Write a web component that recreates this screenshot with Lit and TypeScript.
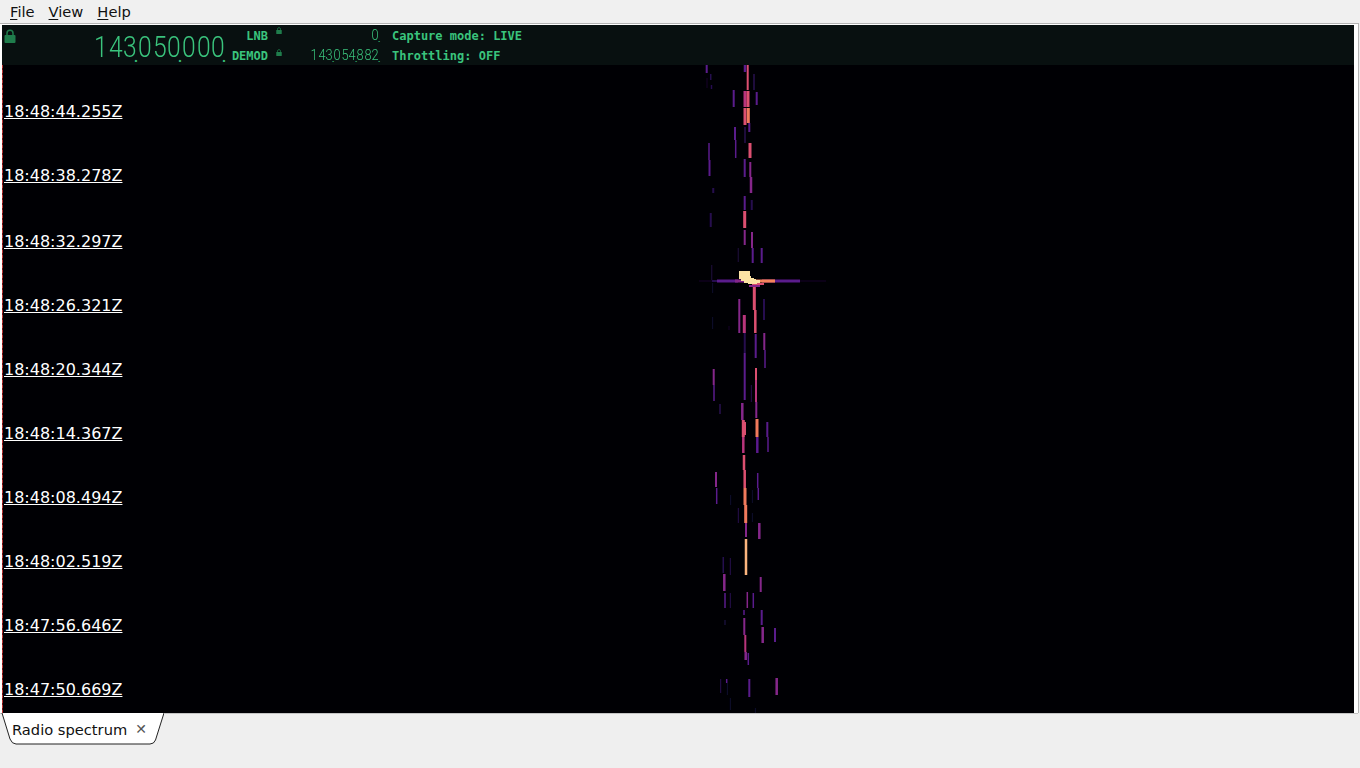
import { LitElement, html, css, svg } from "lit";
import { customElement } from "lit/decorators.js";

const C: Record<string, string> = {
  a: "#150b2e", b: "#27104f", p: "#5a1a8c", m: "#85278a", r: "#b8347c", k: "#dc5070", o: "#f17a5c", y: "#fbb47e",
};
// x, y1, y2, colour, width
const SEG: [number, number, number, string, number][] = [
  [706.7,65,73,"p",2],[710.7,74,80,"b",1.5],[711.5,85,89,"b",1.5],[707,78,88,"a",1],
  [747.7,65,90,"k",2],[745,65,72,"p",2.5],[754,74,90,"b",1.5],[756.7,92,105,"p",2],[733.7,90,107,"p",2],
  [745,91,107,"r",3],[748,91,107,"k",3],[745,108,125,"k",3],[748.3,108,123,"o",3],[749.3,123,132,"p",2],
  [735,127,140,"p",2],[735.7,140,158,"p",1.5],[745,127,143,"b",1.5],[750,143,158,"k",3],
  [709,143,160,"p",1.5],[709.5,160,176,"p",2],[744.7,159,177,"p",2],[750.3,162,177,"m",2],[751,177,193,"m",2.5],
  [713.3,188,193,"b",2],[744.7,196,210,"p",2],[751.7,200,210,"b",2],[744.7,211,228,"k",3],[710.7,213,227,"b",2],
  [744.7,230,245,"m",2],[752,232,248,"m",2],[752.7,248,263,"p",2],[761.7,248,263,"p",2],[738.3,248,262,"a",1.5],
  [711.7,265,280,"a",1.5],[712.7,283,293,"a",1],[754.3,287,310,"k",3],[755.3,310,333,"k",2.5],[755.7,334,358,"p",2],
  [739.3,299,333,"m",2],[744.3,315,333,"r",3],[764,299,320,"b",2],[764.3,333,350,"m",2],[765,350,368,"p",1.5],
  [712.7,317,329,"a",1],[729,326,330,"a",1],[744.7,333,353,"b",2],[744.7,353,400,"p",2],[756,368,380,"k",2],
  [713.7,369,385,"m",2],[714,385,401,"p",1.5],[720,404,414,"b",1.5],[756,380,402,"r",2],[756.3,402,418,"m",2],
  [757,419,437,"o",3],[751.3,385,402,"b",1],[757.3,437,453,"p",2.5],[742.3,403,420,"m",2.5],[743.3,420,437,"k",3],
  [745,422,435,"k",2],[743.3,437,453,"r",2.5],[744,455,470,"k",2.5],[744.7,470,488,"k",2.5],[745,488,505,"o",3],
  [745.7,505,523,"o",3],[746,523,537,"m",2],[746,539,575,"y",2.5],[767.3,422,437,"p",2],[768,437,452,"p",1.5],
  [716,472,487,"m",2],[716.7,488,504,"p",1.5],[757.7,473,488,"p",1.5],[758.3,488,500,"p",1.5],[730.7,495,505,"a",1],
  [738.3,508,523,"b",1],[752.3,490,503,"a",1],[752.3,513,522,"a",1],[759.3,523,539,"m",2.5],
  [723.3,557,573,"b",1.5],[724.3,574,591,"m",2.5],[725,593,608,"p",1.5],[730.3,558,575,"b",1],[730.3,593,608,"b",1],
  [760.7,577,592,"m",2],[747.3,592,608,"m",1.5],[753.3,593,608,"p",1.5],[744,610,615,"p",1.5],[761.7,610,625,"p",2],
  [762.7,627,643,"m",2.5],[744.3,618,635,"m",2],[745.3,635,652,"r",2],[745.7,652,660,"m",2.5],[748.3,653,665,"p",1.5],
  [775,628,642,"p",2],[725,620,625,"b",1],[720.7,679,693,"b",1],[726.7,679,683,"p",1.5],[727.3,683,695,"a",1],
  [749.3,679,697,"p",2],[776.7,678,695,"m",2.5],[730.3,698,710,"a",1],[755.3,708,713,"a",1],
];
// x1, x2, y, colour, height
const HOR: [number, number, number, string, number][] = [
  [699,717,281,"a",1],[800,826,281,"a",1],[712,735,281,"b",2],[717,738,281,"p",3],[735,745,281,"m",3],
  [762,775,281,"r",3],[775,800,281,"p",3],[752,764,284,"k",2],[749,760,286,"m",2],
];
// x, y, w, h
const BLOB: [number, number, number, number][] = [
  [739,271,6,8],[745,271,5,7],[741,276,10,5],[744,278,10,5],[748,279,8,5],[751,280,6,4],[755,280,5,3],[742,274,6,4],
];
const STAMPS: [string, number][] = [
  ["18:48:44.255Z",112],["18:48:38.278Z",176],["18:48:32.297Z",242],["18:48:26.321Z",306],["18:48:20.344Z",370],
  ["18:48:14.367Z",434],["18:48:08.494Z",498],["18:48:02.519Z",562],["18:47:56.646Z",626],["18:47:50.669Z",690],
];

const lock = (cls: string) => html`<svg class=${cls} viewBox="0 0 12 14"><path d="M3 7V4.2a3 3 0 0 1 6 0V7" fill="none" stroke="currentColor" stroke-width="1.5"/><rect x="0.5" y="6" width="11" height="8" rx="1" fill="currentColor"/></svg>`;

@customElement("app-root")
export class AppRoot extends LitElement {
  static styles = css`
    :host { display: flex; flex-direction: column; height: 768px; width: 1360px; background: #efefef; font-family: "DejaVu Sans", sans-serif; overflow: hidden; }
    .menu { height: 23px; flex: none; display: flex; align-items: center; padding-left: 3px; font-size: 14.67px; color: #111; background: #f0f0f0; }
    .menu span { padding: 0 7px; }
    .menu u { text-underline-offset: 2px; }
    .frame { flex: none; height: 690px; border-top: 1px solid #b4b4b4; border-right: 1px solid #b4b4b4; background: #fff; margin-right: 1px; padding: 1px 4px 0 2px; box-sizing: border-box; }
    .view { height: 100%; display: flex; flex-direction: column; background: #000004; }
    .head { height: 40px; flex: none; display: flex; background: #081010; color: #3ac47d; font-family: "DejaVu Sans Mono", monospace; font-size: 12px; font-weight: 700; }
    .biglock { width: 12px; height: 14px; color: #1f7d4c; margin: 4px 0 0 2px; flex: none; }
    .big { width: 136px; margin-left: 73px; flex: none; display: flex; align-items: center; justify-content: flex-end; padding: 4px 0 0; }
    .labels { width: 36px; margin-left: 7px; flex: none; display: flex; flex-direction: column; }
    .labels div, .stat div { height: 20px; line-height: 20px; text-align: right; white-space: nowrap; }
    .labels div { direction: rtl; }
    .labels { padding-top: 1px; }
    .stat { padding-top: 1px; margin-left: 13px; }
    .stat div { text-align: left; }
    .mini { width: 6px; margin-left: 8px; flex: none; display: flex; flex-direction: column; gap: 15px; color: #1f7d4c; padding-top: 2px; }
    .mini svg { width: 6px; height: 7px; display: block; }
    .freqs { width: 96px; margin-left: 1px; flex: none; display: flex; flex-direction: column; align-items: flex-end; }
    .line { height: 20px; display: flex; align-items: center; }
    .dg { display: inline-block; font-family: Roboto, sans-serif; font-weight: 300; text-align: center; line-height: 1; overflow: visible; }
    .big .dg { width: 14.7px; font-size: 29px; transform: scaleX(0.85); }
    .small .dg { width: 7.7px; font-size: 15px; transform: scaleX(0.85); }
    .dot { display: inline-block; width: 0; font-family: Roboto, sans-serif; line-height: 1; overflow: visible; }
    .big .dot { font-size: 14px; transform: translate(-3px, 10px); }
    .small .dot { font-size: 8px; transform: translate(-1px, 5px); }
    .fall { flex: 1; position: relative; overflow: hidden; }
    .fall svg { position: absolute; inset: 0; width: 100%; height: 100%; }
    .mark { position: absolute; left: 0; top: 0; bottom: 0; width: 1px; background: repeating-linear-gradient(#b33 0 3px, #611 3px 5px); }
    .stamp { position: absolute; left: 2px; color: #fff; font-size: 16px; line-height: 20px; text-decoration: underline; white-space: nowrap; }
    .grip { position: absolute; right: -3px; top: 298px; width: 2px; height: 15px; background: repeating-linear-gradient(#999 0 1px, transparent 1px 3px); }
    .tabs { flex: 1; position: relative; padding-left: 2px; }
    .tabs .edge { position: absolute; left: 0; top: 0; right: 2px; height: 1px; background: #c4c4c4; }
    .tab { position: relative; width: 164px; height: 32px; display: flex; align-items: center; font-size: 14.67px; color: #111; margin-left: -2px; }
    .tab svg { position: absolute; inset: 0; width: 100%; height: 100%; }
    .tab span { position: relative; }
    .tab .name { margin-left: 12px; }
    .tab .x { margin-left: 8px; font-weight: 700; color: #555; font-size: 14px; }
  `;

  private digits(s: string) {
    return [...s].map((c) => (c === "." ? html`<span class="dot">.</span>` : html`<span class="dg">${c}</span>`));
  }

  render() {
    return html`
      <div class="menu"><span><u>F</u>ile</span><span><u>V</u>iew</span><span><u>H</u>elp</span></div>
      <div class="frame">
        <div class="view">
          <div class="head">
            ${lock("biglock")}
            <div class="big">${this.digits("143.050.000.")}</div>
            <div class="labels"><div>LNB</div><div>DEMOD</div></div>
            <div class="mini">${lock("")}${lock("")}</div>
            <div class="freqs"><div class="line small">${this.digits("0.")}</div><div class="line small">${this.digits("143.054.882.")}</div></div>
            <div class="stat"><div>Capture mode: LIVE</div><div>Throttling: OFF</div></div>
          </div>
          <div class="fall">
            <svg viewBox="2 65 1352 648" preserveAspectRatio="none">
              <defs>
                <filter id="s" x="-50%" y="-5%" width="200%" height="110%"><feGaussianBlur stdDeviation="0.45"/></filter>
                <filter id="h" x="-5%" y="-100%" width="110%" height="300%"><feGaussianBlur stdDeviation="0.5"/></filter>
              </defs>
              <g filter="url(#h)">
                ${SEG.map(([x, a, b, c, w]) => svg`<rect x=${x - w / 2} y=${a} width=${w} height=${b - a} fill=${C[c]}/>`)}
                ${HOR.map(([a, b, y, c, h]) => svg`<rect x=${a} y=${y - h / 2} width=${b - a} height=${h} fill=${C[c]}/>`)}
                <rect x="745" y="279.5" width="30" height="3" fill="#f4845c"/>
                ${BLOB.map(([x, y, w, h]) => svg`<rect x=${x} y=${y} width=${w} height=${h} fill="#fde3a4"/>`)}
              </g>
            </svg>
            <div class="mark"></div>
            ${STAMPS.map(([t, y]) => html`<div class="stamp" style="top:${y - 75}px">${t}</div>`)}
            <div class="grip"></div>
          </div>
        </div>
      </div>
      <div class="tabs">
        <div class="edge"></div>
        <div class="tab">
          <svg viewBox="0 0 164 32"><path d="M2 0 L10 26 Q12 31 16 31 L150 31 Q154 31 155.500 27 L164 0" fill="#fff" stroke="#222" stroke-width="1"/></svg>
          <span class="name">Radio spectrum</span><span class="x">✕</span>
        </div>
      </div>
    `;
  }
}
